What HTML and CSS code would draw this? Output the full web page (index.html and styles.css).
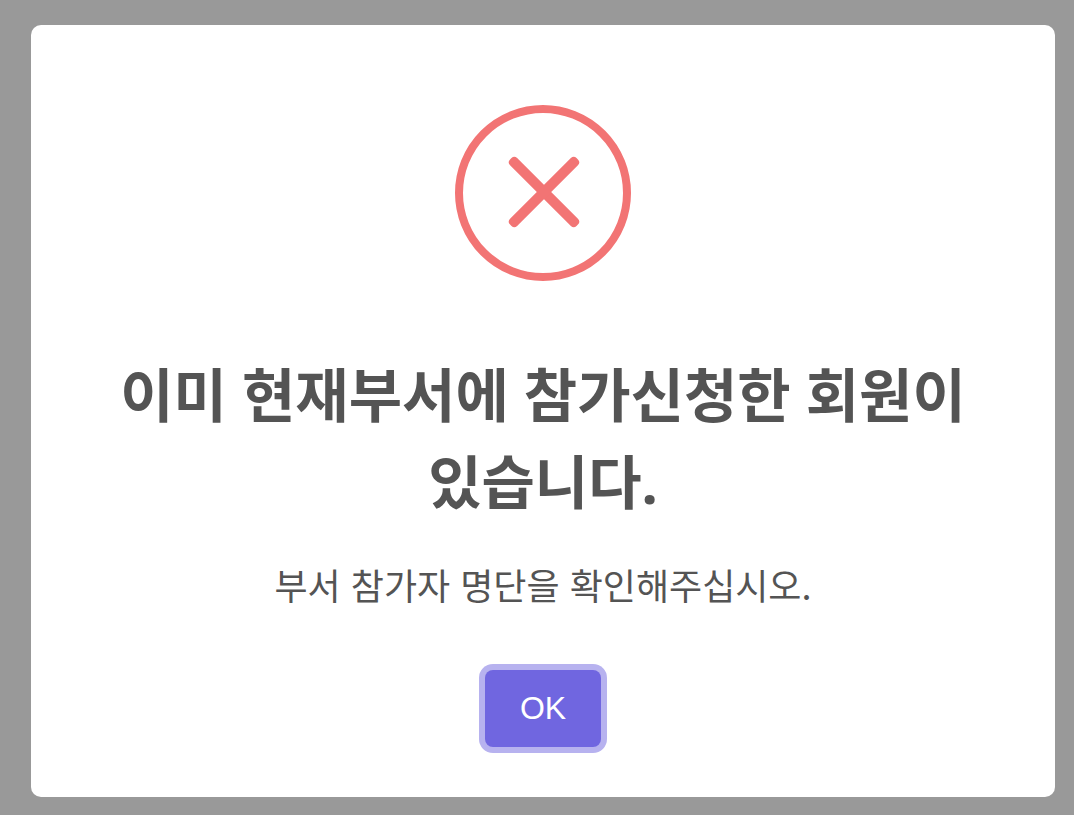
FILE: index.html
```html
<!DOCTYPE html>
<html lang="ko">
<head>
  <meta charset="utf-8">
  <title>참가신청</title>
  <link rel="stylesheet" href="styles.css">
</head>
<body>
  <div class="modal" role="dialog" aria-labelledby="modalTitle" aria-describedby="modalText">
    <svg class="icon" viewBox="0 0 176 176" aria-hidden="true">
      <circle cx="88" cy="88" r="84"/>
      <rect x="42" y="82" width="94" height="10" rx="4" transform="rotate(45 89 87)"/>
      <rect x="42" y="82" width="94" height="10" rx="4" transform="rotate(-45 89 87)"/>
    </svg>
    <h2 class="title" id="modalTitle">이미 현재부서에 참가신청한 회원이 있습니다.</h2>
    <p class="text" id="modalText">부서 참가자 명단을 확인해주십시오.</p>
    <button class="confirm" type="button" autofocus>OK</button>
  </div>
</body>
</html>
```

FILE: styles.css
```css
* {
  box-sizing: border-box;
}
body {
  display: flex;
  min-height: 100vh;
  margin: 0;
  padding: 25px 19px 18px 31px;
  background-color: #999;
  font-family: "Noto Sans CJK KR", sans-serif;
}
.modal {
  display: flex;
  flex: 1;
  flex-direction: column;
  align-items: center;
  padding: 80px 40px 50px;
  border-radius: 10px;
  background-color: #fff;
  color: #545454;
  text-align: center;
}
.icon {
  width: 176px;
  height: 176px;
}
.icon circle {
  fill: none;
  stroke: #f27474;
  stroke-width: 8;
}
.icon rect {
  fill: #f27474;
}
.title {
  margin: 70px 0 0;
  font-family: "Noto Sans", "Noto Sans CJK KR", sans-serif;
  font-size: 58px;
  font-weight: 700;
  line-height: 87px;
  word-break: keep-all;
}
.text {
  margin: 32px 0 0;
  font-size: 36px;
  line-height: 54px;
}
.confirm {
  margin-top: 59px;
  padding: 0 35px;
  border: 0;
  border-radius: 8px;
  outline: 0;
  background-color: #7066e0;
  box-shadow: 0 0 0 6px #b7b2ef;
  color: #fff;
  font: 32px/77px "Liberation Sans", Arial, sans-serif;
}
```
